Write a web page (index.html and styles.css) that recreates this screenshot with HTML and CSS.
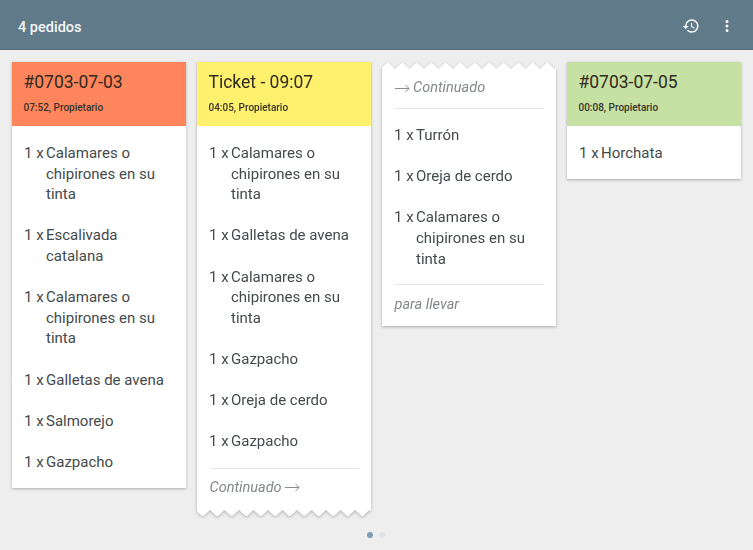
FILE: index.html
```html
<!DOCTYPE html>
<html lang="es">
<head>
<meta charset="utf-8">
<title>4 pedidos</title>
<link rel="stylesheet" href="styles.css">
</head>
<body>
<svg class="defs" width="0" height="0" aria-hidden="true">
  <defs>
    <pattern id="zig-bottom" width="14.5" height="7" patternUnits="userSpaceOnUse" patternTransform="translate(-1.5 0)">
      <path d="M0 0H14.5L8.5 5.5Q7.25 6.6 6 5.5Z" fill="#fff"/>
    </pattern>
    <pattern id="zig-top" width="14.5" height="7" patternUnits="userSpaceOnUse" patternTransform="translate(-1.5 0)">
      <path d="M0 7H14.5L8.5 1.5Q7.25 .4 6 1.5Z" fill="#fff"/>
    </pattern>
    <symbol id="arrow" viewBox="0 0 15 9">
      <path d="M0 4.5H14M10.5 1.2L14.2 4.5L10.5 7.8" fill="none" stroke="#8a8e91" stroke-width="1"/>
    </symbol>
  </defs>
</svg>
<header class="bar">
  <h1 class="bar-title">4 pedidos</h1>
  <div class="bar-actions">
    <svg class="icon" viewBox="0 0 24 24"><path fill="#fff" d="M13 3a9 9 0 0 0-9 9H1l3.9 3.9.07.14L9 12H6a7 7 0 1 1 2.05 4.95l-1.42 1.42A9 9 0 1 0 13 3zm-1 5v5l4.28 2.54.72-1.21-3.5-2.08V8H12z"/></svg>
    <svg class="icon" viewBox="0 0 24 24"><path fill="#fff" d="M12 8a2 2 0 1 0 0-4 2 2 0 0 0 0 4zm0 2a2 2 0 1 0 0 4 2 2 0 0 0 0-4zm0 6a2 2 0 1 0 0 4 2 2 0 0 0 0-4z"/></svg>
  </div>
</header>
<main class="board">
  <section class="ticket">
    <div class="head head-red">
      <h2 class="num">#0703-07-03</h2>
      <p class="meta">07:52, Propietario</p>
    </div>
    <ul class="items">
      <li class="item"><span class="qty">1 x</span><span>Calamares o chipirones en su tinta</span></li>
      <li class="item"><span class="qty">1 x</span><span>Escalivada catalana</span></li>
      <li class="item"><span class="qty">1 x</span><span>Calamares o chipirones en su tinta</span></li>
      <li class="item"><span class="qty">1 x</span><span>Galletas de avena</span></li>
      <li class="item"><span class="qty">1 x</span><span>Salmorejo</span></li>
      <li class="item"><span class="qty">1 x</span><span>Gazpacho</span></li>
    </ul>
  </section>
  <section class="ticket ticket-torn">
    <div class="head head-yellow">
      <h2 class="num">Ticket - 09:07</h2>
      <p class="meta">04:05, Propietario</p>
    </div>
    <ul class="items items-split">
      <li class="item"><span class="qty">1 x</span><span>Calamares o chipirones en su tinta</span></li>
      <li class="item"><span class="qty">1 x</span><span>Galletas de avena</span></li>
      <li class="item"><span class="qty">1 x</span><span>Calamares o chipirones en su tinta</span></li>
      <li class="item"><span class="qty">1 x</span><span>Gazpacho</span></li>
      <li class="item"><span class="qty">1 x</span><span>Oreja de cerdo</span></li>
      <li class="item"><span class="qty">1 x</span><span>Gazpacho</span></li>
    </ul>
    <div class="note-wrap note-wrap-end">
      <p class="note note-top">Continuado <svg class="arrow" width="15" height="9"><use href="#arrow"/></svg></p>
    </div>
    <svg class="zig" width="174" height="7"><rect width="174" height="7" fill="url(#zig-bottom)"/></svg>
  </section>
  <section class="ticket ticket-torn">
    <svg class="zig" width="174" height="7"><rect width="174" height="7" fill="url(#zig-top)"/></svg>
    <div class="note-wrap note-wrap-start">
      <p class="note note-bottom"><svg class="arrow" width="15" height="9"><use href="#arrow"/></svg> Continuado</p>
    </div>
    <ul class="items items-split items-mid">
      <li class="item"><span class="qty">1 x</span><span>Turrón</span></li>
      <li class="item"><span class="qty">1 x</span><span>Oreja de cerdo</span></li>
      <li class="item"><span class="qty">1 x</span><span>Calamares o chipirones en su tinta</span></li>
    </ul>
    <div class="note-wrap note-wrap-last">
      <p class="note note-top">para llevar</p>
    </div>
  </section>
  <section class="ticket">
    <div class="head head-green">
      <h2 class="num">#0703-07-05</h2>
      <p class="meta">00:08, Propietario</p>
    </div>
    <ul class="items">
      <li class="item"><span class="qty">1 x</span><span>Horchata</span></li>
    </ul>
  </section>
</main>
<div class="dots"><span class="dot dot-on"></span><span class="dot"></span></div>
</body>
</html>
```
FILE: styles.css
```css
* { box-sizing: border-box; }
html, body { margin: 0; height: 100%; }
body {
  position: relative;
  overflow: hidden;
  background: #eeeeee;
  font-family: Roboto, "Liberation Sans", sans-serif;
  color: #454a4c;
}
.defs { position: absolute; }
.bar {
  height: 50px;
  background: #607a8a;
  border-bottom: 1px solid #56707f;
  display: flex;
  align-items: center;
  justify-content: space-between;
  padding: 5px 17px 0 18px;
}
.bar-title {
  margin: 0;
  font-size: 14.5px;
  font-weight: 500;
  color: #f4f7f8;
}
.bar-actions { display: flex; align-items: center; gap: 18px; margin-top: -2px; }
.icon { width: 18px; height: 18px; display: block; opacity: .95; }
.board {
  display: flex;
  align-items: flex-start;
  gap: 11px;
  padding: 12px 12px 0;
}
.ticket {
  width: 174px;
  flex: none;
  background: #fff;
  border-radius: 1px;
  box-shadow: 0 1px 3px rgba(0,0,0,.28);
}
.ticket-torn {
  background: none;
  box-shadow: none;
  filter: drop-shadow(0 1px 1.5px rgba(0,0,0,.28));
}
.head { height: 64px; padding: 9px 11.5px 0; }
.head-red { background: #ff855c; }
.head-yellow { background: #fff06e; }
.head-green { background: #c7e1a4; }
.num {
  margin: 0;
  font-size: 17.5px;
  line-height: 22px;
  font-weight: 400;
  color: #302a20;
}
.meta {
  margin: 9px 0 0;
  font-size: 10px;
  line-height: 12px;
  font-weight: 500;
  color: #39332a;
}
.items {
  list-style: none;
  margin: 0;
  padding: 17px 12px 15.5px;
  display: flex;
  flex-direction: column;
  gap: 20.6px;
  font-size: 15px;
  line-height: 20.6px;
  background: #fff;
}
.item { display: flex; }
.qty { flex: none; width: 22px; }
.items-split { padding-bottom: 16px; }
.items-mid { padding-top: 16px; padding-bottom: 15px; }
.note-wrap { background: #fff; padding: 0 12.5px; }
.note-wrap-start { padding-top: 9px; }
.note-wrap-end { padding-bottom: 12px; }
.note-wrap-last { padding-bottom: 11px; }
.note-wrap-last .note-top { padding-top: 10px; }
.note {
  margin: 0;
  font-size: 14.5px;
  line-height: 20px;
  font-style: italic;
  color: #83878a;
}
.note-top { border-top: 1px solid #e8e8e8; padding-top: 9px; }
.note-bottom { border-bottom: 1px solid #e8e8e8; padding-bottom: 10px; }
.arrow { display: inline-block; vertical-align: -0.5px; }
.zig { display: block; }
.dots {
  position: absolute;
  left: 367px;
  top: 532px;
  display: flex;
  gap: 6px;
}
.dot { width: 6px; height: 6px; border-radius: 50%; background: #dfe2e4; }
.dot-on { background: #7f9db3; }
```
